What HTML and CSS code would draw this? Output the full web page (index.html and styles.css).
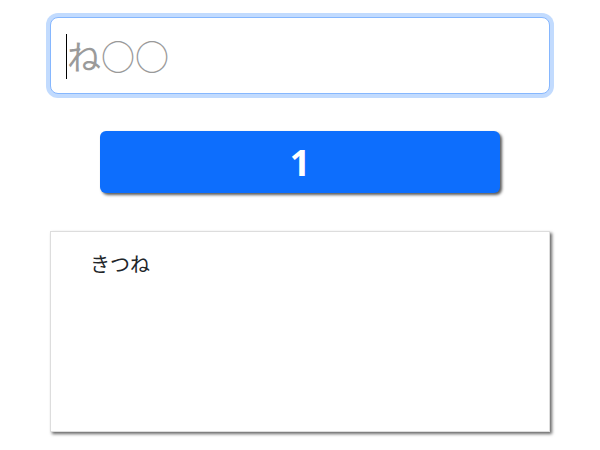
FILE: index.html
```html
<!DOCTYPE html>
<html lang="ja">
<head>
    <meta charset="UTF-8">
    <meta name="viewport" content="width=device-width, initial-scale=1.0">
    <title>しりとり</title>
    <link rel="stylesheet" href="styles.css">
</head>
<body>
    <div class="container">
        <div class="input-wrap">
            <input type="text" class="word-input focused" placeholder="ね○○">
            <span class="caret"></span>
        </div>
        <button class="submit">1</button>
        <ul class="words">
            <li>きつね</li>
        </ul>
    </div>
</body>
</html>
```

FILE: styles.css
```css
body {
    font-family: "Noto Sans", "Noto Sans CJK JP", sans-serif;
    background-color: #fff;
    color: #212529;
    margin: 0;
    padding: 0;
}
.container {
    width: 500px;
    margin: 0 auto;
    padding: 17px 0 18px;
    display: flex;
    flex-direction: column;
    align-items: center;
}
.input-wrap {
    position: relative;
    width: 100%;
}
.word-input {
    display: block;
    box-sizing: border-box;
    width: 100%;
    height: 77px;
    padding: 0 16px;
    font-family: "Noto Sans CJK JP", sans-serif;
    font-size: 34px;
    color: #212529;
    border: 1px solid #dee2e6;
    border-radius: 8px;
    outline: none;
}
.word-input.focused {
    border-color: #86b7fe;
    box-shadow: 0 0 0 4px rgba(13, 110, 253, 0.25);
}
.word-input::placeholder {
    color: #9a9a9a;
}
.caret {
    position: absolute;
    left: 16px;
    top: 17px;
    width: 1px;
    height: 45px;
    background: #000;
}
.submit {
    margin-top: 37px;
    width: 400px;
    height: 62px;
    background-color: #0d6efd;
    color: white;
    border: none;
    border-radius: 6px;
    font-family: "Noto Sans", sans-serif;
    font-size: 36px;
    font-weight: bold;
    box-shadow: 2px 2px 3px rgba(0, 0, 0, 0.65);
    cursor: pointer;
}
.words {
    box-sizing: border-box;
    width: 100%;
    height: 201px;
    margin: 38px 0 0;
    padding: 17px 39px;
    list-style: none;
    border: 1px solid #ddd;
    box-shadow: 2px 2px 3px rgba(0, 0, 0, 0.6);
    font-size: 20px;
}
```
